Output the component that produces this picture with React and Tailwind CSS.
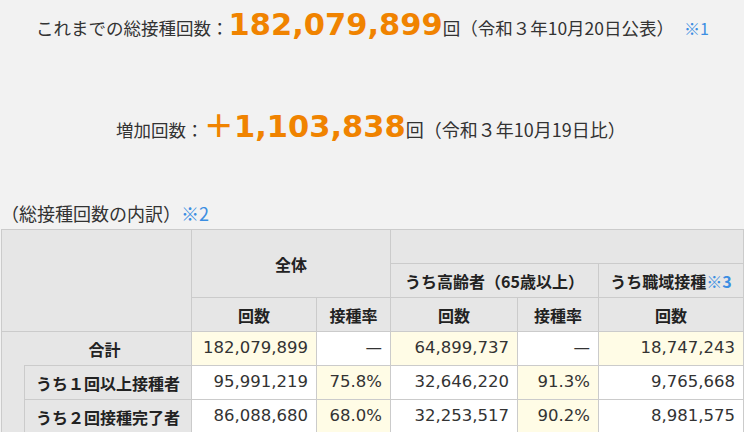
const jp = "font-['Noto_Sans_CJK_JP',sans-serif]";
const num = "font-['DejaVu_Sans','Noto_Sans_CJK_JP',sans-serif]";

const rows = [
  { label: "うち１回以上接種者", total: "95,991,219", rate: "75.8%", old: "32,646,220", oldRate: "91.3%", work: "9,765,668" },
  { label: "うち２回接種完了者", total: "86,088,680", rate: "68.0%", old: "32,253,517", oldRate: "90.2%", work: "8,981,575" },
];

const th = "border border-[#cbcbcb] bg-[#e6e6e6] font-bold text-center text-[16px] text-[#222]";
const td = "border border-[#cbcbcb] px-2 text-right text-[16.5px] text-[#333]";

export default function App() {
  return (
    <div className={`w-[744px] h-[432px] overflow-hidden bg-[#f2f2f2] text-[#333] ${jp}`}>
      {/* 総接種回数 */}
      <div className="flex items-baseline pl-[36px] pt-[5px] h-[50px]">
        <span className="text-[17.5px]">これまでの総接種回数：</span>
        <span className={`${num} font-bold text-[30.5px] leading-[40px] text-[#f08300]`}>182,079,899</span>
        <span className="text-[17.5px]">回（令和３年10月20日公表）</span>
        <span className="text-[16px] text-[#3b8ee2] ml-[10px]">※1</span>
      </div>

      {/* 増加回数 */}
      <div className="flex items-baseline pl-[116px] pt-[57px] h-[108px]">
        <span className="text-[17.5px]">増加回数：</span>
        <span className={`${num} font-bold text-[30.5px] leading-[40px] text-[#f08300]`}>＋1,103,838</span>
        <span className="text-[18px]">回（令和３年10月19日比）</span>
      </div>

      <div className="flex items-center h-[71px] pt-[40px] pl-[1px]">
        <span className="text-[18px]">（総接種回数の内訳）</span>
        <span className="text-[18px] text-[#3b8ee2]">※2</span>
      </div>

      <table className="ml-[1px] border-collapse table-fixed w-[742px]">
        <colgroup>
          <col className="w-[23px]" />
          <col className="w-[167px]" />
          <col className="w-[125px]" />
          <col className="w-[74px]" />
          <col className="w-[127px]" />
          <col className="w-[81px]" />
          <col className="w-[145px]" />
        </colgroup>
        <thead>
          <tr className="h-[34px]">
            <th className={th} colSpan={2} rowSpan={3}></th>
            <th className={th} colSpan={2} rowSpan={2}>全体</th>
            <th className={th} colSpan={3}></th>
          </tr>
          <tr className="h-[34px]">
            <th className={th} colSpan={2}>うち高齢者（65歳以上）</th>
            <th className={`${th} whitespace-nowrap`}>
              うち職域接種<span className="text-[#3b8ee2]">※3</span>
            </th>
          </tr>
          <tr className="h-[34px]">
            <th className={th}>回数</th>
            <th className={th}>接種率</th>
            <th className={th}>回数</th>
            <th className={th}>接種率</th>
            <th className={th}>回数</th>
          </tr>
        </thead>
        <tbody className={num}>
          <tr className="h-[34px]">
            <th className={`${th} ${jp} pl-4`} colSpan={2}>合計</th>
            <td className={`${td} bg-[#fffce6]`}>182,079,899</td>
            <td className={`${td} bg-white text-center`}>—</td>
            <td className={`${td} bg-[#fffce6]`}>64,899,737</td>
            <td className={`${td} bg-white text-center`}>—</td>
            <td className={`${td} bg-[#fffce6]`}>18,747,243</td>
          </tr>
          {rows.map((r, i) => (
            <tr key={r.label} className="h-[34px]">
              {i === 0 && <th className={`${th} [border-top-style:hidden]`} rowSpan={2}></th>}
              <th className={`${th} ${jp} whitespace-nowrap`}>{r.label}</th>
              <td className={`${td} bg-white`}>{r.total}</td>
              <td className={`${td} bg-[#fffce6] px-1`}>{r.rate}</td>
              <td className={`${td} bg-white`}>{r.old}</td>
              <td className={`${td} bg-[#fffce6]`}>{r.oldRate}</td>
              <td className={`${td} bg-white`}>{r.work}</td>
            </tr>
          ))}
        </tbody>
      </table>
    </div>
  );
}
